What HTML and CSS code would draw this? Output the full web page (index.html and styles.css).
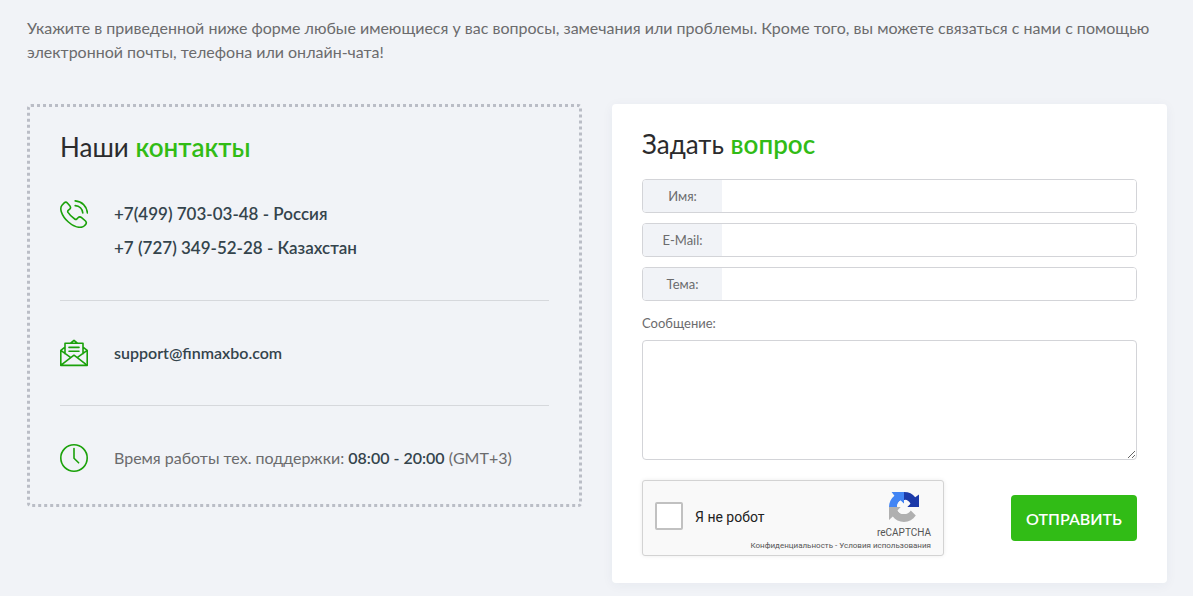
FILE: index.html
```html
<!DOCTYPE html>
<html lang="ru">
<head>
<meta charset="utf-8">
<meta name="viewport" content="width=device-width, initial-scale=1">
<title>Контакты</title>
<link rel="stylesheet" href="styles.css">
</head>
<body>
<main class="page">
  <p class="intro">Укажите в приведенной ниже форме любые имеющиеся у вас вопросы, замечания или проблемы. Кроме того, вы можете связаться с нами с помощью электронной почты, телефона или онлайн-чата!</p>
  <div class="columns">
    <section class="contacts">
      <h2 class="title">Наши <span class="accent">контакты</span></h2>
      <div class="row row-phones">
        <svg class="icon" viewBox="0 0 28 28" aria-hidden="true">
          <path d="M4.2 2.9 L2 5.2 C.7 6.7 .5 9 1.3 11.7 C2.5 15.5 5.2 19.2 8.4 22 C11.8 25 15.6 27 19.3 27.3 C21.6 27.5 23.2 27 24.4 25.8 L25.5 24.6 C26.6 23.4 26.6 22.2 25.5 21 L21.6 17.6 C20.3 16.6 19.1 16.7 18 17.8 L16.7 19.1 C16.1 19.6 15.4 19.5 14.7 19 C12 17.2 9.5 14.7 8 12.4 C7.5 11.5 7.6 11 8.2 10.4 L9.7 9.2 C10.8 8.2 10.8 7.2 10 6.1 L7.6 3.2 C6.5 2 5.3 1.9 4.2 2.9 Z"/>
          <path d="M15.2 .9 C21.8 1.4 27 6.3 27.4 13 M15.2 5.6 C19.4 5.9 22.5 9 22.8 13"/>
        </svg>
        <div class="text">
          <a class="strong" href="tel:+74997030348">+7(499) 703-03-48 - Россия</a>
          <a class="strong" href="tel:+77273495228">+7 (727) 349-52-28 - Казахстан</a>
        </div>
      </div>
      <div class="row">
        <svg class="icon" viewBox="0 0 28 28" aria-hidden="true">
          <path d="M5 8.2 L.8 11.4 V26.4 H27.2 V11.4 L23 8.2 M5 14.8 V4.2 H23 V14.8 M10.6 4.2 L14 1.4 L17.4 4.2 M.8 11.4 L10.5 18.3 M27.2 11.4 L17.5 18.3 M1 26.2 L14 16.2 L27 26.2 M9 8.4 H19 M9 12.2 H19"/>
        </svg>
        <div class="text"><a class="strong" href="mailto:support@finmaxbo.com">support@finmaxbo.com</a></div>
      </div>
      <div class="row row-hours">
        <svg class="icon" viewBox="0 0 28 28" aria-hidden="true">
          <circle cx="14" cy="14" r="13.2"/>
          <path d="M14 4.5 V14.2 L18.6 18.8"/>
        </svg>
        <div class="text">Время работы тех. поддержки: <b class="strong">08:00 - 20:00</b> (GMT+3)</div>
      </div>
    </section>
    <form class="card">
      <h2 class="title">Задать <span class="accent">вопрос</span></h2>
      <div class="field"><label class="tag" for="name">Имя:</label><input class="input" id="name" type="text"></div>
      <div class="field"><label class="tag" for="email">E-Mail:</label><input class="input" id="email" type="email"></div>
      <div class="field"><label class="tag" for="topic">Тема:</label><input class="input" id="topic" type="text"></div>
      <label class="message-label" for="message">Сообщение:</label>
      <textarea class="message" id="message"></textarea>
      <div class="actions">
        <div class="captcha">
          <input class="check" id="robot" type="checkbox">
          <label class="check-label" for="robot">Я не робот</label>
          <div class="brand">
            <svg class="brand-logo" viewBox="0 0 30 30" aria-hidden="true">
              <path fill="#1c3aa9" d="M15 0 C20 0 23.6 1.8 26.2 5.3 L30 2.5 V15 H17.8 L21.4 11.4 C20.2 9.4 18.6 8.2 16.8 7.8 L15 8 Z"/>
              <path fill="#4285f4" d="M15 0 V12 L11.5 8.4 C9.4 9.6 8.2 11.6 8 15 H0 C0 10.5 2 6.4 5.4 3.8 L2.6 0 Z"/>
              <path fill="#b0b0b0" d="M0 15 H12 L8.6 18.4 C10 20.8 12 22 15 22 C18 22 20.4 20.8 21.8 18.4 L26.8 23.6 C24 27.8 20 30 15 30 C10.2 30 6.2 28 3.8 24.6 L0 28 Z"/>
              <path fill="#f9f9f9" d="M15 8 H17.5 C19 9.6 19.3 11 18.4 12.3 L21.6 11.6 L18.2 15 C15.5 15.6 14.6 17.2 15.6 19 C14 19.5 12.6 21 12.8 22 C10.8 21 9.4 20 8.6 18.4 L12 15 C11 13.6 9.6 13.6 8 14.4 C8.2 11.8 9.4 9.8 11.5 8.4 L15 11.8 Z"/>
            </svg>
            <span class="brand-name">reCAPTCHA</span>
          </div>
          <div class="legal"><a class="legal-link" href="#privacy">Конфиденциальность</a> - <a class="legal-link" href="#terms">Условия использования</a></div>
        </div>
        <button class="submit" type="submit">ОТПРАВИТЬ</button>
      </div>
    </form>
  </div>
</main>
</body>
</html>
```
FILE: styles.css
```css
* { box-sizing: border-box; }
body {
  margin: 0;
  background: #f1f3f7;
  color: #6b6b6d;
  font-family: Lato, "Open Sans", sans-serif;
  font-size: 16px;
}
a { color: inherit; text-decoration: none; }
.page { padding: 16px 26px 13px 27px; }
.intro { margin: 0 0 40px; line-height: 24px; }
.columns {
  display: grid;
  grid-template-columns: 1fr 1fr;
  gap: 30px;
  align-items: start;
}
.contacts {
  border: 3px dotted #babdc6;
  border-radius: 4px;
  padding: 20px 30px 30px;
}
.title {
  margin: 0;
  color: #2b2b2d;
  font-size: 26px;
  font-weight: 400;
  line-height: 40px;
}
.accent { color: #31bc16; font-weight: 600; }
.row {
  display: flex;
  align-items: center;
  gap: 26px;
  height: 105px;
  border-bottom: 1px solid #d6d8dc;
}
.row-phones { height: 134px; align-items: flex-start; padding-top: 30px; }
.row-phones .icon { margin-top: 3px; }
.row-hours { border-bottom: 0; height: auto; padding-top: 35px; margin-bottom: -1px; }
.icon {
  flex: none;
  width: 28px;
  height: 28px;
  fill: none;
  stroke: #1ba10a;
  stroke-width: 1.6;
  stroke-linecap: round;
  stroke-linejoin: round;
}
.text { line-height: 34px; }
.text a { display: block; }
.strong { color: #34444c; font-weight: 600; }
.row-phones .strong { font-size: 17px; }
.card {
  border-radius: 4px;
  background: #fff;
  box-shadow: 0 2px 12px rgba(40, 50, 90, .05);
  padding: 20px 30px 27px;
}
.card .title { margin-bottom: 15px; }
.field {
  display: flex;
  height: 34px;
  margin-bottom: 10px;
  border: 1px solid #d3d4d8;
  border-radius: 4px;
  overflow: hidden;
}
.tag {
  flex: none;
  width: 79px;
  background: #f1f3f7;
  font-size: 13px;
  line-height: 32px;
  text-align: center;
}
.input { flex: 1; min-width: 0; border: 0; padding: 0 10px; font: inherit; outline: 0; }
.message-label { display: block; margin-top: 12px; font-size: 13px; line-height: 20px; }
.message {
  display: block;
  width: 100%;
  height: 120px;
  margin-top: 7px;
  border: 1px solid #d3d4d8;
  border-radius: 4px;
  padding: 8px 10px;
  font: inherit;
}
.actions {
  display: flex;
  align-items: center;
  justify-content: space-between;
  margin-top: 20px;
}
.captcha {
  display: grid;
  grid-template-columns: 28px 1fr 54px;
  grid-template-rows: 60px 12px;
  column-gap: 12px;
  width: 302px;
  height: 76px;
  border: 1px solid #d3d3d3;
  border-radius: 3px;
  background: #f9f9f9;
  box-shadow: 0 0 4px rgba(0, 0, 0, .08);
  padding: 0 12px;
  font-family: Roboto, sans-serif;
}
.check {
  appearance: none;
  align-self: end;
  width: 28px;
  height: 28px;
  margin: 0 0 11px;
  border: 2px solid #c1c1c1;
  border-radius: 2px;
  background: #fff;
}
.check:checked { background: #31bc16; }
.check-label { align-self: end; margin-bottom: 14px; color: #222; font-size: 14px; line-height: 20px; }
.brand { display: flex; flex-direction: column; align-items: center; padding-top: 11px; }
.brand-logo { width: 30px; height: 30px; }
.brand-name { margin-top: 4px; color: #555; font-size: 10px; line-height: 14px; }
.legal {
  grid-column: 1 / -1;
  color: #555;
  font-size: 8px;
  line-height: 10px;
  text-align: right;
}
.submit {
  width: 126px;
  height: 46px;
  border: 0;
  border-radius: 4px;
  background: #31bc16;
  color: #fff;
  font: inherit;
  font-weight: 600;
  padding: 0;
}
```
